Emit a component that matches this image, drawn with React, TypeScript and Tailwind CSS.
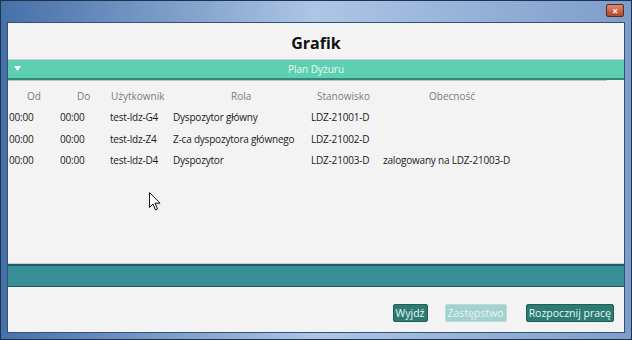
import React from "react";

const COLS = [
  { w: "w-[51px]", head: "Od", hp: "pl-[18px]" },
  { w: "w-[50px]", head: "Do", hp: "pl-[17px]" },
  { w: "w-[63px]", head: "Użytkownik", hp: "pl-[1px]" },
  { w: "w-[138px]", head: "Rola", hp: "pl-[58px]" },
  { w: "w-[72px]", head: "Stanowisko", hp: "pl-[6px]" },
  { w: "flex-1", head: "Obecność", hp: "pl-[46px]" },
];

const ROWS = [
  ["00:00", "00:00", "test-ldz-G4", "Dyspozytor główny", "LDZ-21001-D", ""],
  ["00:00", "00:00", "test-ldz-Z4", "Z-ca dyspozytora głównego", "LDZ-21002-D", ""],
  ["00:00", "00:00", "test-ldz-D4", "Dyspozytor", "LDZ-21003-D", "zalogowany na LDZ-21003-D"],
];

const Cursor = () => (
  <svg className="absolute left-[141px] top-[169px]" width="12" height="19" viewBox="0 0 12 19">
    <path d="M0.5 0.5 L0.5 15.5 L4 12 L6.5 18 L8.5 17 L6 11.2 L11 11.2 Z" fill="#fff" stroke="#111" strokeWidth="1" strokeLinejoin="round" />
  </svg>
);

export default function App() {
  return (
    <div
      className="w-[632px] h-[340px] flex flex-col border border-[#1f3350] bg-gradient-to-r from-[#4670a8] via-[#adc6e5] to-[#7d9dca] px-[6px] pb-[6px] overflow-hidden"
      style={{ fontFamily: "'Open Sans', 'Noto Sans', sans-serif" }}
    >
      {/* title bar */}
      <div className="h-[21px] flex items-start justify-end pt-[3px] pr-[1px]">
        <div className="w-[18px] h-[13px] rounded-[2px] border border-[#5a2a1c] bg-gradient-to-b from-[#e08a6a] to-[#b4462a] flex items-center justify-center text-white text-[10px] font-bold leading-none">
          ×
        </div>
      </div>

      {/* client */}
      <div className="relative flex-1 flex flex-col border border-[#34507a] bg-[#f3f3f3] text-[10px]">
        <div className="h-[36px] flex items-center justify-center text-[16px] font-bold text-[#111] pt-[4px]">
          Grafik
        </div>

        <div className="border-t border-[#c6cccc]">
          <div className="relative h-[18px] bg-[#5ecfb0] flex items-center justify-center text-[#e9fbf5] text-[10px]">
            <svg className="absolute left-[6px] top-[6px]" width="7" height="5" viewBox="0 0 7 5">
              <path d="M0 0 L7 0 L3.5 5 Z" fill="#fff" />
            </svg>
            Plan Dyżuru
          </div>
          <div className="h-[2px] bg-[#2f8a7c]" />
          <div className="h-[1px] bg-[#bfc6c6] mr-[17px]" />
        </div>

        <div className="flex-1 pt-[5px] text-[#1a1a1a]">
          <div className="flex h-[21px] items-center text-[#7b7b7b] pl-[1px]">
            {COLS.map((c) => (
              <div key={c.head} className={`${c.w} ${c.hp} whitespace-nowrap`}>
                {c.head}
              </div>
            ))}
          </div>
          {ROWS.map((r, i) => (
            <div key={i} className="flex h-[21.5px] items-center pl-[1px]">
              {r.map((v, j) => (
                <div key={j} className={`${COLS[j].w} whitespace-nowrap tracking-[-0.2px]`}>
                  {v}
                </div>
              ))}
            </div>
          ))}
        </div>

        <div className="border-t border-[#c9d0d0]">
          <div className="h-[2px] bg-[#1e5d66]" />
          <div className="h-[20px] bg-[#3a8e98]" />
          <div className="h-[1px] bg-[#245a63]" />
        </div>

        <div className="h-[45px] flex items-end justify-end gap-[17px] pr-[10px] pb-[10px] text-[10.5px]">
          <button className="h-[18px] px-[2px] rounded-[2px] bg-[#2c7c74] border border-[#1f5f58] text-[#e8f6f4] leading-none">
            Wyjdź
          </button>
          <button className="h-[18px] px-[2px] rounded-[2px] bg-[#a3d1cd] border border-[#b9dcd9] text-[#e6f3f1] leading-none">
            Zastępstwo
          </button>
          <button className="h-[18px] px-[2px] ml-[2px] rounded-[2px] bg-[#2c7c74] border border-[#1f5f58] text-[#e8f6f4] leading-none">
            Rozpocznij pracę
          </button>
        </div>

        <Cursor />
      </div>
    </div>
  );
}
